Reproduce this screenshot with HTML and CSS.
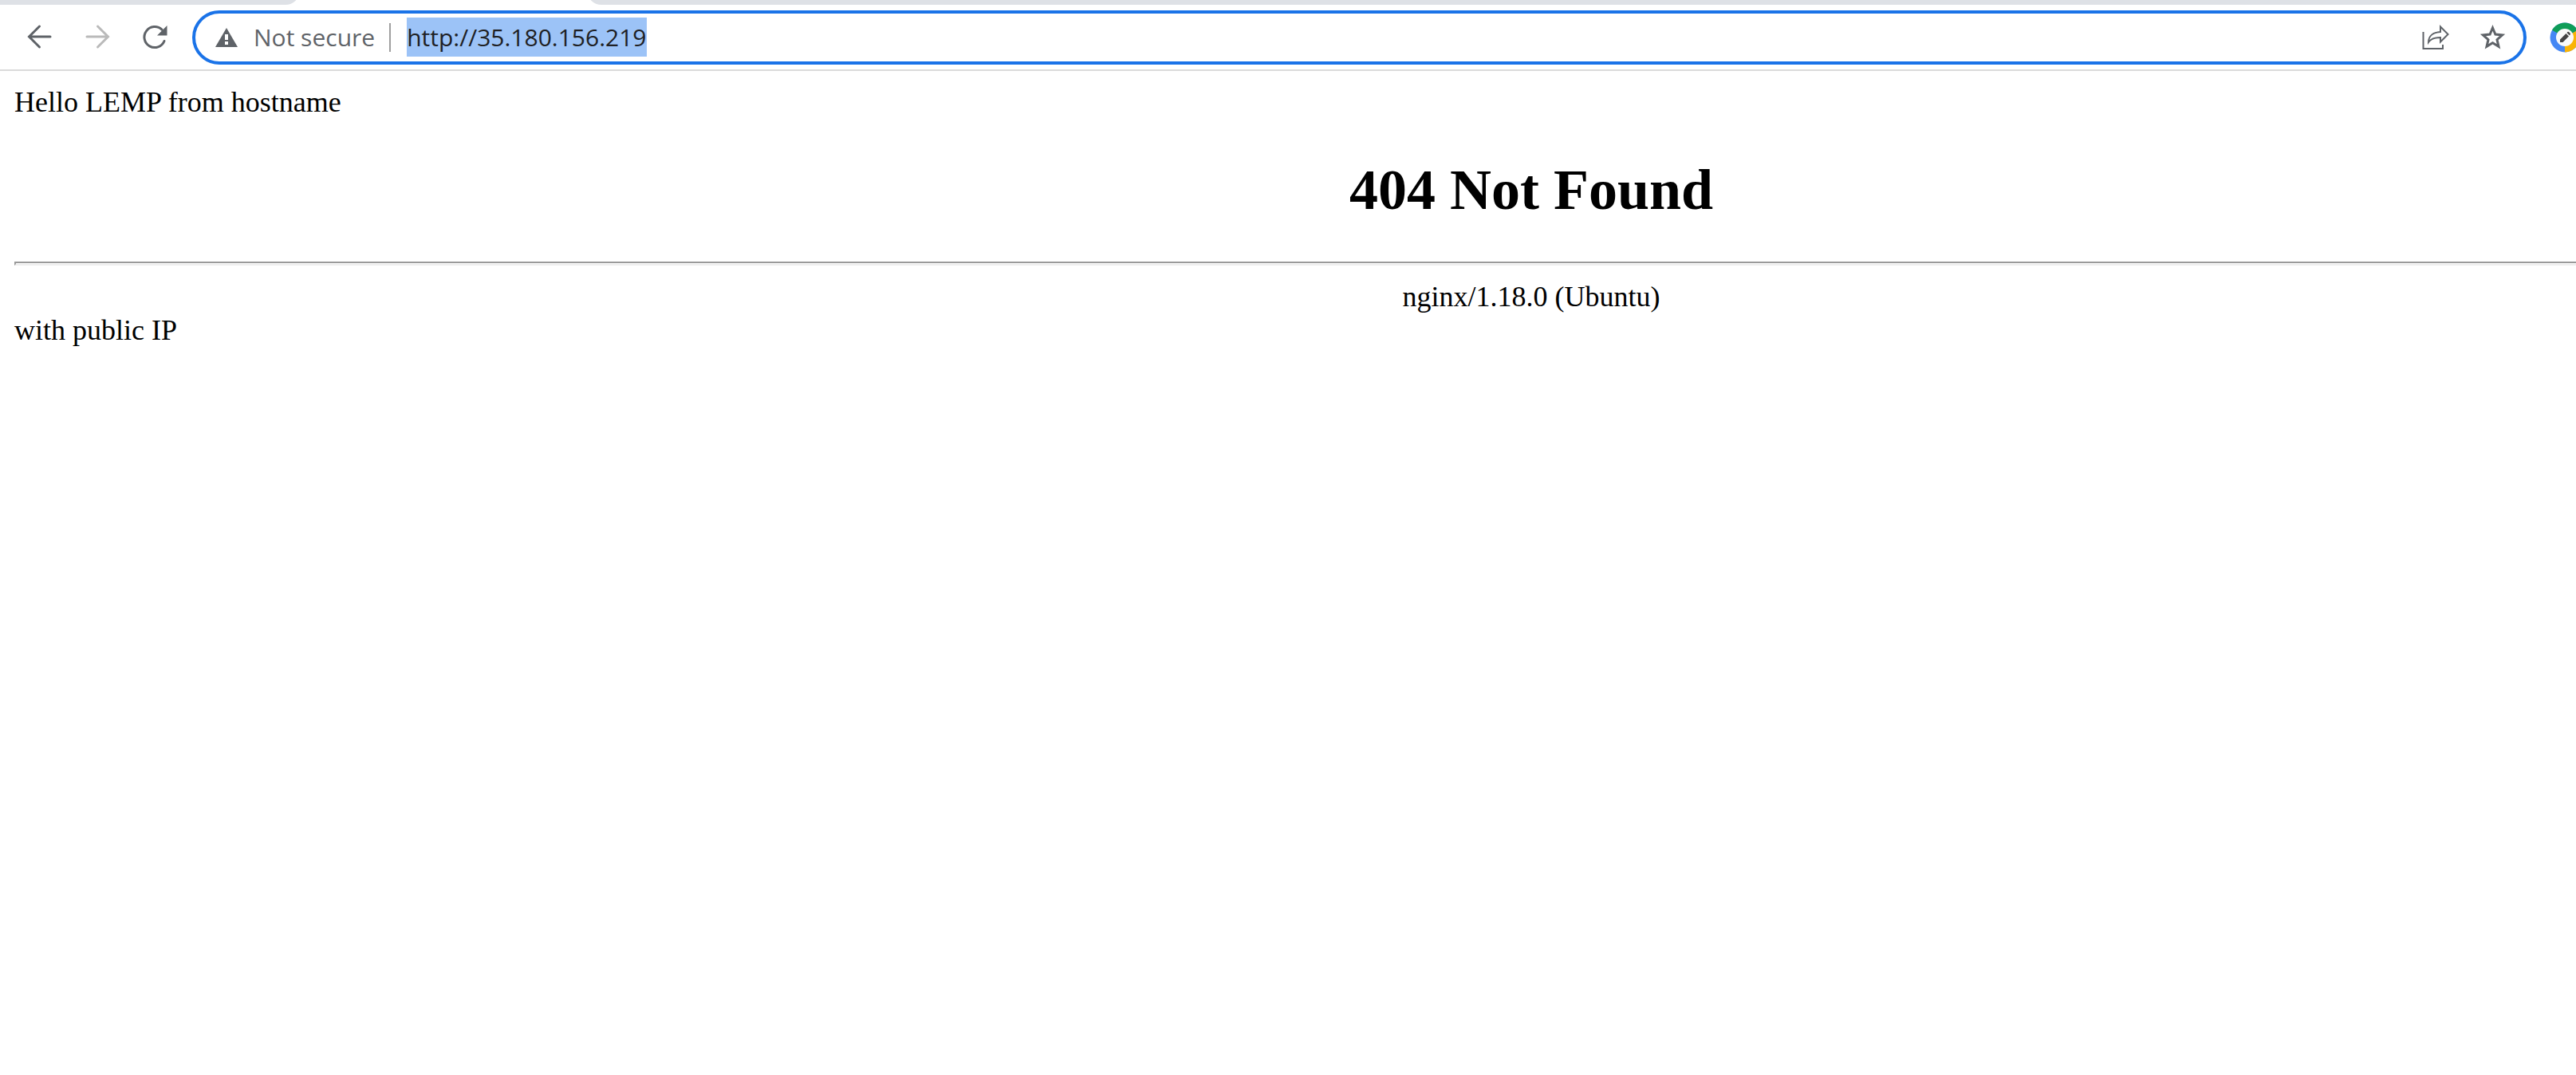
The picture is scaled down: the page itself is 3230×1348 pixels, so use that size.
FILE: index.html
```html
<!DOCTYPE html>
<html lang="en">
<head>
<meta charset="utf-8">
<title>404 Not Found</title>
<link rel="stylesheet" href="styles.css">
</head>
<body>
<div class="tab-strip">
  <div class="tab tab-before"></div>
  <div class="tab-active"></div>
  <div class="tab tab-after"></div>
</div>
<header class="toolbar">
  <nav class="nav-buttons">
    <button class="icon-button" type="button" aria-label="Back">
      <svg width="36" height="36" viewBox="0 0 36 36"><path d="M31 18H5M17.500 5L4.500 18L17.500 31"/></svg>
    </button>
    <button class="icon-button faded" type="button" aria-label="Forward">
      <svg width="36" height="36" viewBox="0 0 36 36"><path d="M5 18H31M18.500 5L31.500 18L18.500 31"/></svg>
    </button>
    <button class="icon-button" type="button" aria-label="Reload">
      <svg width="36" height="36" viewBox="0 0 36 36"><path d="M30 23.500A13 13 0 1 1 27 9.200"/><path class="solid" d="M33.500 4V16.500H21Z"/></svg>
    </button>
  </nav>
  <div class="omnibox">
    <svg class="warning" width="28" height="26" viewBox="0 0 28 26"><path fill="#5f6368" d="M14 1L28 25H0Z"/><path fill="#fff" d="M12 9h4v7h-4zM12 18h4v4h-4z"/></svg>
    <label class="security" for="address">Not secure</label>
    <span class="separator"></span>
    <input class="address" id="address" type="text" value="http://35.180.156.219" spellcheck="false">
    <div class="actions">
      <button class="icon-button" type="button" aria-label="Share">
        <svg class="thin" width="36" height="36" viewBox="0 0 36 36"><path d="M3.500 11V32H28V27M10 24C10 16 16 11.500 25 11V4.500L34.500 14L25 23.500V18C17.500 18 13 19.500 10 24Z"/></svg>
      </button>
      <button class="icon-button" type="button" aria-label="Bookmark this page">
        <svg class="star" width="36" height="36" viewBox="0 0 36 36"><path d="M18.500 6L21.900 14.100L30.600 14.900L24 20.700L26 29.300L18.500 24.700L11 29.300L13 20.700L6.400 14.900L15.100 14.100Z"/></svg>
      </button>
    </div>
  </div>
  <button class="extension" type="button" aria-label="Extension">
    <svg width="38" height="38" viewBox="0 0 38 38">
      <circle cx="19" cy="19" r="18.500" fill="#4587f4"/>
      <path fill="#0f9d58" d="M19 19L3 9.800A18.500 18.500 0 0 1 35 9.800Z"/>
      <path fill="#f9b406" d="M19 19L35 9.800A18.500 18.500 0 0 1 19 37.500Z"/>
      <circle cx="19" cy="19" r="11" fill="#fafafa"/>
      <path fill="#444" d="M13 21.500L20.500 14L24 17.500L16.500 25H13ZM21.500 13L22.500 12Q23.500 11.500 24.500 12.500L25.500 13.500Q26.500 14.500 25.500 15.500L25 16.500Z"/>
    </svg>
  </button>
</header>
<main class="page">
  <p>Hello LEMP from hostname</p>
  <h1>404 Not Found</h1>
  <hr>
  <p class="server">nginx/1.18.0 (Ubuntu)</p>
  <p>with public IP</p>
</main>
</body>
</html>
```
FILE: styles.css
```css
body {
  margin: 0;
  background: #fff;
}

.tab-strip {
  display: flex;
  align-items: flex-end;
  height: 6px;
  overflow: hidden;
}

.tab {
  flex: none;
  height: 36px;
  background: #dee1e6;
}

.tab-before {
  width: 376px;
  border-bottom-right-radius: 18px;
}

.tab-active {
  flex: none;
  width: 360px;
}

.tab-after {
  flex: 1;
  border-bottom-left-radius: 18px;
}

.toolbar {
  display: flex;
  align-items: center;
  height: 81px;
  padding-left: 14px;
  border-bottom: 2px solid #dadada;
}

.nav-buttons,
.actions {
  display: flex;
}

.nav-buttons {
  padding-bottom: 2px;
}

.icon-button {
  display: flex;
  align-items: center;
  justify-content: center;
  width: 72px;
  height: 54px;
  padding: 0;
  border: 0;
  background: none;
  color: #5f6368;
}

.faded {
  color: #bababa;
}

.icon-button svg {
  fill: none;
  stroke: currentColor;
  stroke-width: 3;
  stroke-linecap: round;
}

.icon-button .solid {
  fill: currentColor;
  stroke: none;
}

.icon-button .thin {
  stroke-width: 2;
  stroke-linecap: butt;
}

.icon-button .star {
  stroke-linecap: butt;
}

.omnibox {
  display: flex;
  flex: 1;
  align-items: center;
  box-sizing: border-box;
  height: 68px;
  margin: 0 29px 0 11px;
  padding: 0 3px 0 25px;
  border: 4px solid #1a73e8;
  border-radius: 34px;
  font: 30px/48px "Open Sans", "Noto Sans", sans-serif;
}

.security {
  margin: 0 18px 0 20px;
  color: #5f6368;
}

.separator {
  width: 2px;
  height: 36px;
  margin-right: 20px;
  background: #9e9e9e;
}

.address {
  field-sizing: content;
  height: 49px;
  padding: 0;
  border: 0;
  outline: 0;
  background: #9cc3f7;
  color: #202124;
  font: inherit;
}

.actions {
  margin-left: auto;
}

.extension {
  display: flex;
  width: 33px;
  padding: 0;
  border: 0;
  background: none;
  overflow: hidden;
}

.extension svg {
  flex: none;
}

.page {
  padding: 18px 0 18px 18px;
  color: #000;
  font: 36px/42px "Liberation Serif", "Times New Roman", serif;
}

.page p {
  margin: 0;
}

.page h1 {
  margin: 48px 0;
  padding-left: 592px;
  font-size: 72px;
  line-height: 83px;
  text-align: center;
}

.page hr {
  height: 1px;
  margin: 18px 0;
  border: 2px solid;
  border-color: #9a9a9a #eee #eee #9a9a9a;
  border-right: 0;
}

.page .server {
  padding-left: 592px;
  text-align: center;
}
```
